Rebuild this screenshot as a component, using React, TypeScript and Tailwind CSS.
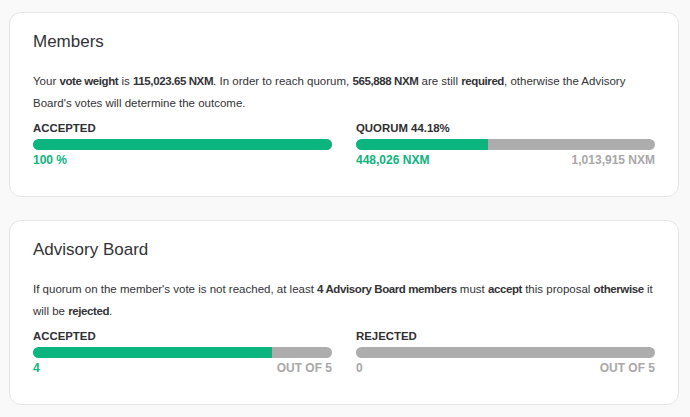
import React from "react";

function Bar({ pct }: { pct: number }) {
  return (
    <div className="mt-[3px] h-[11px] w-full overflow-hidden rounded-full bg-[#adadad]">
      <div className="h-full rounded-l-full bg-[#0cb47e]" style={{ width: `${pct}%` }} />
    </div>
  );
}

function Stat({
  label,
  pct,
  left,
  right,
  leftGray,
}: {
  label: string;
  pct: number;
  left: string;
  right?: string;
  leftGray?: boolean;
}) {
  return (
    <div className="flex flex-col">
      <div className="text-[11.4px] leading-[16px] font-semibold text-[#2f2f33]">{label}</div>
      <Bar pct={pct} />
      <div className="mt-[2px] flex justify-between text-[12px] leading-[16px] font-semibold">
        <span className={leftGray ? "text-[#a8a8a8]" : "text-[#0cb47e]"}>{left}</span>
        {right && <span className="text-[#a8a8a8]">{right}</span>}
      </div>
    </div>
  );
}

function B({ children }: { children: React.ReactNode }) {
  return <b className="font-bold tracking-[-0.4px]">{children}</b>;
}

function Card({ title, children, stats }: { title: string; children: React.ReactNode; stats: React.ReactNode }) {
  return (
    <div className="ml-[9px] mr-[11px] rounded-[12px] border border-[#e6e6e6] bg-white px-[23px] pt-[15px] pb-[28px]">
      <h2 className="text-[17px] leading-[28px] font-medium text-[#333338]">{title}</h2>
      <p className="mt-[14px] text-[11.5px] leading-[22px] text-[#333338]">{children}</p>
      <div className="mt-[6px] grid grid-cols-2 gap-x-[24px]">{stats}</div>
    </div>
  );
}

export default function App() {
  return (
    <div
      className="min-h-[417px] w-[690px] bg-[#f9f9f9] pt-[12px]"
      style={{ fontFamily: '"Liberation Sans", Arial, sans-serif' }}
    >
      <Card
        title="Members"
        stats={
          <>
            <Stat label="ACCEPTED" pct={100} left="100 %" />
            <Stat label="QUORUM 44.18%" pct={44.18} left="448,026 NXM" right="1,013,915 NXM" />
          </>
        }
      >
        Your <B>vote weight</B> is <B>115,023.65 NXM</B>. In order to reach quorum, <B>565,888 NXM</B> are still{" "}
        <B>required</B>, otherwise the Advisory Board's votes will determine the outcome.
      </Card>
      <div className="h-[23px]" />
      <Card
        title="Advisory Board"
        stats={
          <>
            <Stat label="ACCEPTED" pct={80} left="4" right="OUT OF 5" />
            <Stat label="REJECTED" pct={0} left="0" right="OUT OF 5" leftGray />
          </>
        }
      >
        If quorum on the member's vote is not reached, at least <B>4 Advisory Board members</B> must <B>accept</B> this
        proposal <B>otherwise</B> it will be <B>rejected</B>.
      </Card>
    </div>
  );
}
